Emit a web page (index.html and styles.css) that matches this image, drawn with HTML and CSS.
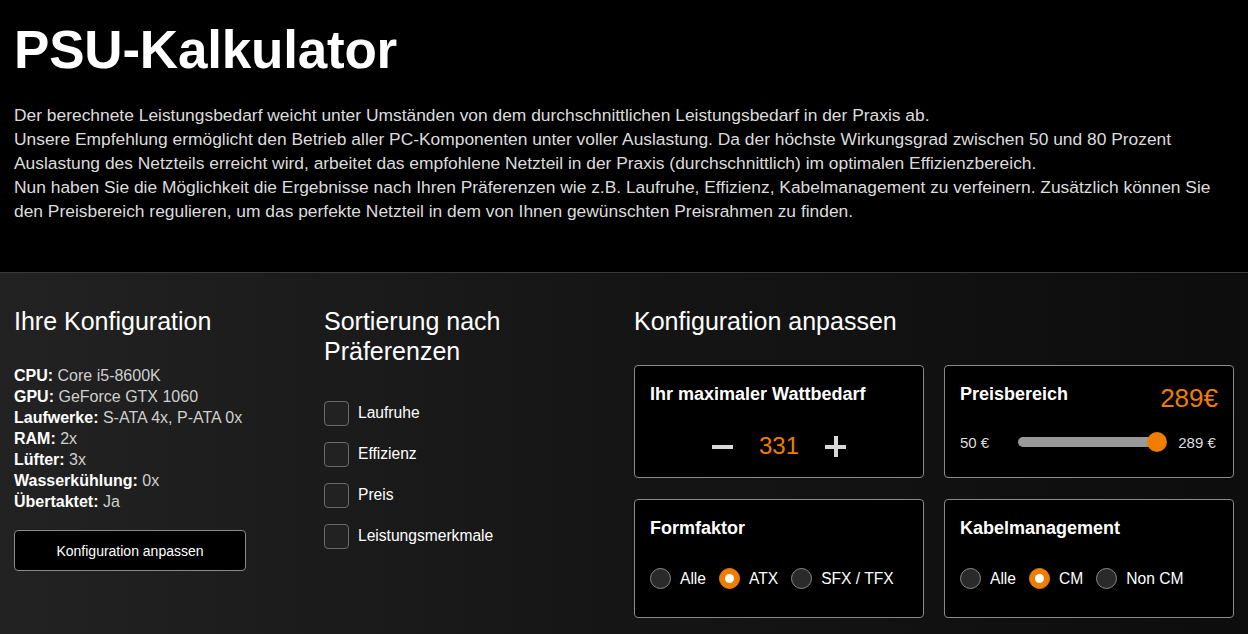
FILE: index.html
```html
<!DOCTYPE html>
<html lang="de">
<head>
<meta charset="utf-8">
<link rel="stylesheet" href="styles.css">
</head>
<body>
<header class="intro">
  <h1 class="title">PSU-Kalkulator</h1>
  <p class="desc">Der berechnete Leistungsbedarf weicht unter Umständen von dem durchschnittlichen Leistungsbedarf in der Praxis ab.<br>Unsere Empfehlung ermöglicht den Betrieb aller PC-Komponenten unter voller Auslastung. Da der höchste Wirkungsgrad zwischen 50 und 80 Prozent Auslastung des Netzteils erreicht wird, arbeitet das empfohlene Netzteil in der Praxis (durchschnittlich) im optimalen Effizienzbereich.<br>Nun haben Sie die Möglichkeit die Ergebnisse nach Ihren Präferenzen wie z.B. Laufruhe, Effizienz, Kabelmanagement zu verfeinern. Zusätzlich können Sie den Preisbereich regulieren, um das perfekte Netzteil in dem von Ihnen gewünschten Preisrahmen zu finden.</p>
</header>
<main class="panel">
  <section class="col">
    <h2 class="heading">Ihre Konfiguration</h2>
    <ul class="specs">
      <li><b>CPU:</b> Core i5-8600K</li>
      <li><b>GPU:</b> GeForce GTX 1060</li>
      <li><b>Laufwerke:</b> S-ATA 4x, P-ATA 0x</li>
      <li><b>RAM:</b> 2x</li>
      <li><b>Lüfter:</b> 3x</li>
      <li><b>Wasserkühlung:</b> 0x</li>
      <li><b>Übertaktet:</b> Ja</li>
    </ul>
    <button class="btn">Konfiguration anpassen</button>
  </section>
  <section class="col">
    <h2 class="heading narrow">Sortierung nach Präferenzen</h2>
    <ul class="checks">
      <li><span class="box"></span>Laufruhe</li>
      <li><span class="box"></span>Effizienz</li>
      <li><span class="box"></span>Preis</li>
      <li><span class="box"></span>Leistungsmerkmale</li>
    </ul>
  </section>
  <section class="col wide">
    <h2 class="heading">Konfiguration anpassen</h2>
    <div class="cards">
      <div class="card">
        <div class="card-title">Ihr maximaler Wattbedarf</div>
        <div class="stepper">
          <span class="step minus"></span>
          <span class="value">331</span>
          <span class="step plus"></span>
        </div>
      </div>
      <div class="card">
        <div class="card-head">
          <div class="card-title">Preisbereich</div>
          <div class="price">289€</div>
        </div>
        <div class="range">
          <span class="range-label">50 €</span>
          <span class="track"><span class="thumb"></span></span>
          <span class="range-label">289 €</span>
        </div>
      </div>
      <div class="card tall">
        <div class="card-title">Formfaktor</div>
        <div class="radios">
          <span class="radio"></span><span class="rlabel">Alle</span>
          <span class="radio on"></span><span class="rlabel">ATX</span>
          <span class="radio"></span><span class="rlabel">SFX / TFX</span>
        </div>
      </div>
      <div class="card tall">
        <div class="card-title">Kabelmanagement</div>
        <div class="radios">
          <span class="radio"></span><span class="rlabel">Alle</span>
          <span class="radio on"></span><span class="rlabel">CM</span>
          <span class="radio"></span><span class="rlabel">Non CM</span>
        </div>
      </div>
    </div>
  </section>
</main>
</body>
</html>
```
FILE: styles.css
```css
* { box-sizing: border-box; }
html, body { margin: 0; padding: 0; background: #000; height: 100%; overflow: hidden; }
body { font-family: "Liberation Sans", Arial, sans-serif; color: #fff; }

.intro { background: #000; padding: 24px 14px 0; height: 273px; border-bottom: 1px solid #3a3a3a; }
.title { margin: 0; font-size: 53px; font-weight: 700; line-height: 52px; letter-spacing: -0.2px; }
.desc { margin: 27px 0 0; font-size: 17.4px; line-height: 24px; color: #dcdcdc; max-width: 1210px; }

.panel { display: flex; padding: 0 14px; height: 361px; overflow: hidden; background: linear-gradient(to right, #222 0%, #151515 50%, #0d0d0d 100%); }
.col { width: 310px; padding-top: 33px; }
.col.wide { width: 600px; }
.heading { margin: 0; font-size: 25px; font-weight: 400; line-height: 30px; }
.heading.narrow { width: 260px; }

.specs { list-style: none; margin: 29px 0 0; padding: 0; font-size: 16px; line-height: 21px; color: #cfcfcf; }
.specs b { color: #fff; }
.btn { margin-top: 18px; width: 232px; height: 41px; background: #000; color: #fff; border: 1px solid #8a8a8a; border-radius: 4px; font-family: inherit; font-size: 14px; }

.checks { list-style: none; margin: 35px 0 0; padding: 0; display: flex; flex-direction: column; gap: 17px; }
.checks li { display: flex; align-items: center; font-size: 15.6px; height: 24px; color: #fff; }
.box { width: 25px; height: 25px; border: 1px solid #6a6a6a; border-radius: 4px; background: #222; margin-right: 9px; }

.cards { margin-top: 29px; display: grid; grid-template-columns: 290px 290px; column-gap: 20px; row-gap: 21px; }
.card { background: #000; border: 1px solid #8a8a8a; border-radius: 4px; height: 113px; padding: 18px 15px 0; }
.card.tall { height: 119px; }
.card-title { font-size: 18px; font-weight: 700; line-height: 20px; }
.card-head { display: flex; justify-content: space-between; align-items: flex-start; }
.price { font-size: 26px; color: #ef7d00; line-height: 28px; margin-top: 0; }

.stepper { display: flex; align-items: center; justify-content: center; gap: 26px; margin-top: 28px; height: 28px; }
.value { font-size: 24px; color: #ef7d00; }
.step { position: relative; width: 21px; height: 21px; }
.step::before, .plus::after { content: ""; position: absolute; background: #d8d8d8; }
.step::before { left: 0; top: 9px; width: 21px; height: 4px; }
.plus::after { left: 9px; top: 0; width: 4px; height: 21px; }

.range { display: flex; align-items: center; margin-top: 18px; height: 24px; }
.range-label { font-size: 15px; color: #ddd; }
.track { position: relative; margin: 0 19px 0 29px; width: 141px; height: 10px; background: #999; border-radius: 5px; }
.thumb { position: absolute; right: -8px; top: -5px; width: 20px; height: 20px; border-radius: 50%; background: #ef7d00; }

.radios { display: flex; align-items: center; margin-top: 30px; white-space: nowrap; }
.radio { flex: none; width: 21px; height: 21px; border-radius: 50%; border: 1px solid #8a8a8a; background: #2a2a2a; margin-right: 9px; position: relative; }
.radio.on { background: #ef7d00; border-color: #ef7d00; }
.radio.on::after { content: ""; position: absolute; left: 5px; top: 5px; width: 9px; height: 9px; border-radius: 50%; background: #fff; }
.rlabel { font-size: 15.6px; margin-right: 13px; }
```
